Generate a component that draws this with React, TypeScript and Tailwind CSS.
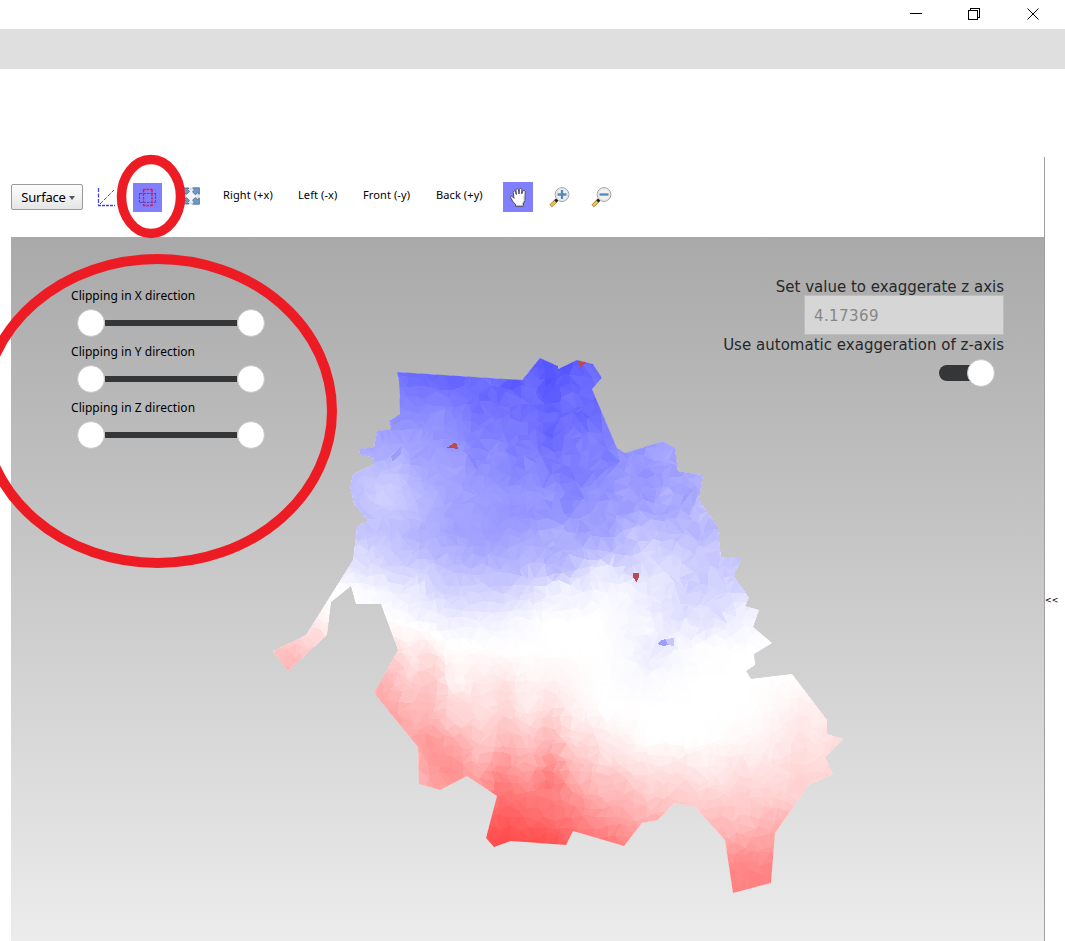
import React from "react";

const OUTLINE =
  "397,372 522,380 540,358 558,366 558,369 577,360 593,364 602,378 592,389 617,448 625,453 663,441 675,448 678,471 703,475 699,500 718,527 721,557 742,557 734,576 749,598 745,606 759,610 753,627 772,643 754,654 755,665 746,671 751,679 792,674 827,720 827,734 844,739 825,757 833,774 809,785 775,833 771,883 733,893 725,840 695,807 675,803 658,820 642,823 624,846 573,831 566,845 511,841 494,847 486,838 497,796 467,776 440,790 419,784 418,747 374,693 398,650 381,604 356,604 351,586 331,602 327,635 288,671 273,651 306,635 353,560 357,526 368,521 354,504 350,487 353,474 374,464 374,458 359,454 360,449 374,447 377,431 391,429 389,421 400,414 399,381";

// Scalar field sampled every 50px across (from x=250) and 30px down (from y=350).
const FIELD: number[][] = [
  [-60, -60, -60, -63, -62, -60, -64, -59, -50, -40, -40, -30, -30],
  [-55, -55, -60, -56, -59, -60, -64, -58, -50, -40, -40, -30, -30],
  [-45, -45, -45, -44, -48, -55, -60, -57, -50, -40, -35, -30, -30],
  [-38, -38, -37, -37, -42, -50, -57, -53, -40, -36, -32, -25, -20],
  [-28, -28, -28, -29, -37, -45, -50, -47, -39, -34, -29, -25, -20],
  [-22, -22, -25, -23, -37, -41, -42, -41, -37, -30, -27, -20, -15],
  [-20, -20, -24, -27, -35, -38, -37, -35, -25, -28, -25, -15, -10],
  [-8, -8, -12, -19, -29, -31, -27, -20, -14, -25, -21, -15, 0],
  [0, 0, 0, -7, -18, -19, -12, -2, -7, -19, -14, -4, 0],
  [13, 9, 0, 0, -8, -5, 0, 0, -5, -12, -4, 0, 0],
  [20, 17, 15, 15, 2, 0, 0, 0, -7, -1, 0, 0, 3],
  [20, 25, 30, 26, 11, 6, 4, 0, -2, 0, 0, 1, 6],
  [20, 30, 36, 34, 18, 12, 12, 0, 0, 0, 0, 6, 10],
  [20, 30, 36, 34, 31, 24, 23, 8, 0, 0, 3, 10, 14],
  [20, 25, 30, 20, 42, 42, 38, 21, 11, 9, 11, 14, 17],
  [20, 20, 20, 18, 35, 57, 50, 34, 22, 18, 18, 20, 22],
  [50, 50, 50, 50, 60, 68, 63, 48, 36, 28, 29, 32, 34],
  [60, 60, 60, 60, 65, 73, 72, 60, 50, 45, 46, 46, 46],
  [60, 60, 60, 60, 65, 73, 72, 60, 50, 48, 50, 50, 50],
];

function hash(a: number, b: number, c: number) {
  const s = Math.sin(a * 127.1 + b * 311.7 + c * 74.7) * 43758.5453;
  return s - Math.floor(s);
}

function smooth(t: number) {
  return t * t * (3 - 2 * t);
}

function valueNoise(x: number, y: number, seed: number) {
  const i = Math.floor(x);
  const j = Math.floor(y);
  const u = smooth(x - i);
  const v = smooth(y - j);
  const top = hash(i, j, seed) * (1 - u) + hash(i + 1, j, seed) * u;
  const low = hash(i, j + 1, seed) * (1 - u) + hash(i + 1, j + 1, seed) * u;
  return (top * (1 - v) + low * v) * 2 - 1;
}

function sample(x: number, y: number) {
  const gx = Math.min(11.999, Math.max(0, (x - 250) / 50));
  const gy = Math.min(17.999, Math.max(0, (y - 350) / 30));
  const i = Math.floor(gx);
  const j = Math.floor(gy);
  const u = gx - i;
  const v = gy - j;
  return (
    (FIELD[j][i] * (1 - u) + FIELD[j][i + 1] * u) * (1 - v) +
    (FIELD[j + 1][i] * (1 - u) + FIELD[j + 1][i + 1] * u) * v
  );
}

function shade(x: number, y: number, seed: number) {
  const base = sample(x, y);
  const blue = base < 0;
  const weight = Math.min(1, Math.abs(base) / 10);
  const rough = blue && (x > 540 || (x > 470 && y < 470)) ? 1.1 : 0.5;
  let v = base + weight * (valueNoise(x / 19, y / 19, 3) * 4.5 * rough + (seed - 0.5) * 4 * rough);
  // Pale basin on the west side.
  if (blue) v += 4 * Math.exp(-((x - 380) ** 2 + (y - 492) ** 2) / 900);
  // Ridges running north to south.
  if (!blue && y < 790 && x < 610) v += weight * valueNoise(x / 24, y / 110, 9) * 8;
  v = blue ? Math.min(0, v) : Math.max(0, v);
  const c = Math.round(255 * (1 - Math.abs(v) / 100));
  return v < 0 ? `rgb(${c},${c},255)` : `rgb(255,${c},${c})`;
}

function buildMesh() {
  const step = 9;
  const groups = new Map<string, string>();
  const point = (i: number, j: number): [number, number] => [
    Math.round((266 + i * step + (hash(i, j, 1) - 0.5) * 8) * 10) / 10,
    Math.round((350 + j * step + (hash(i, j, 2) - 0.5) * 8) * 10) / 10,
  ];
  for (let j = 0; j < 62; j++) {
    for (let i = 0; i < 66; i++) {
      const a = point(i, j);
      const b = point(i + 1, j);
      const c = point(i + 1, j + 1);
      const d = point(i, j + 1);
      const tris = hash(i, j, 5) > 0.5 ? [[a, b, c], [a, c, d]] : [[a, b, d], [b, c, d]];
      tris.forEach((t, k) => {
        const cx = (t[0][0] + t[1][0] + t[2][0]) / 3;
        const cy = (t[0][1] + t[1][1] + t[2][1]) / 3;
        const color = shade(cx, cy, hash(i, j, 11 + k));
        groups.set(color, (groups.get(color) ?? "") + `M${t[0]}L${t[1]}L${t[2]}Z`);
      });
    }
  }
  return Array.from(groups.entries());
}

const MESH = buildMesh();

function Terrain() {
  return (
    <svg className="absolute inset-0" width="1033" height="704" viewBox="11 237 1033 704" shapeRendering="crispEdges">
      <defs>
        <clipPath id="outline">
          <polygon points={OUTLINE} />
        </clipPath>
      </defs>
      <g clipPath="url(#outline)">
        <polygon points={OUTLINE} fill="#fff" />
        {MESH.map(([color, d]) => (
          <path key={color} d={d} fill={color} />
        ))}
        <path d="M657 644L662 640L665 639L668 645L663 646Z" fill="#9c9cff" />
        <path d="M665 639L674 638V646L668 645Z" fill="#c5c5ff" />
        <path d="M391 456L402 446L401 453L393 462Z" fill="#9c9cfb" />
      </g>
      <g fill="#b84c50">
        <path d="M577 361L585 362L586 363L580 367.500Z" />
        <path d="M447 447.500L454 443L456 443L458.500 449Z" />
        <path d="M633 573H639V577L637 581.500H636L633 577Z" />
      </g>
    </svg>
  );
}

function WindowControls() {
  return (
    <div className="flex h-[29px] items-start justify-end bg-white pt-2 pr-[25px]">
      <svg width="130" height="13" viewBox="0 0 130 13" fill="none" stroke="#000" shapeRendering="crispEdges">
        <path d="M0 5.500h12M58.500 2.500h9v9h-9zM60.500 2V.5h9v9H68" />
        <path d="M117.500 .5l11 11M128.500 .5l-11 11" shapeRendering="auto" />
      </svg>
    </div>
  );
}

function AngleIcon() {
  return (
    <svg width="20" height="20" viewBox="0 0 20 20" fill="none" stroke="#4646e0" className="ml-[13px]">
      <path d="M2.500 1v17" strokeDasharray="4 1.500" strokeWidth="1.300" />
      <path d="M2 18.500h17" strokeDasharray="3 1" strokeWidth="1.300" />
      <path d="M4 17L18 3" strokeDasharray="4 1.500" strokeWidth="1" />
    </svg>
  );
}

function ClipIcon() {
  return (
    <svg width="29" height="29" viewBox="0 0 29 29" fill="none" className="ml-[17px] bg-[#8080ff]">
      <path d="M6.500 9V6.500H9M20 6.500H22.500V9M22.500 20V22.500H20M9 22.500H6.500V20" stroke="#2fbd6a" />
      <path d="M7 10.500H22M7 19.500H22" stroke="#4545cf" strokeDasharray="2.500 1" strokeWidth="1.200" />
      <path d="M6.500 10V20M22.500 10V20" stroke="#4545cf" strokeDasharray="2.500 1" strokeWidth="1.200" />
      <path d="M10 6.500H20M10 22.500H20" stroke="#e8124c" strokeDasharray="2.500 1" strokeWidth="1.400" />
      <path d="M10.500 7V22.500M19 7V22.500" stroke="#e8124c" strokeDasharray="2.500 1" strokeWidth="1.400" />
    </svg>
  );
}

function ExpandIcon() {
  return (
    <svg width="18" height="18" viewBox="0 0 18 18" className="-mt-[3px] ml-[20px]">
      <path d="M.5 .5h17v17H.5z" fill="#d9dde2" />
      <path d="M9 2l3 4 4 3-4 3-3 4-3-4-4-3 4-3z" fill="#f4f4f4" />
      <g fill="#6d9ac6" stroke="#44698f" strokeWidth=".7">
        <path d="M1 1h6L5.500 2.500 7.500 4.500 4.500 7.500 2.500 5.500 1 7zM17.400 .8v6.500l-1.900-1.500L13.500 7.800 10.500 5l2-2L10.800.8zM17.400 17.200h-6.600l1.700-2L10.500 13.300 13.200 10.600l2.200 2 2-1.600zM1 17v-6l1.500 1.500L4.500 10.500 7.500 13.500 5.500 15.500 7 17z" />
      </g>
      <path d="M0 13l2-1.500 1.500 2L2 15z" fill="#111" />
    </svg>
  );
}

function HandIcon() {
  return (
    <div className="ml-[19px] flex h-[30px] w-[30px] items-center justify-center bg-[#8080ff] pl-0.5">
      <svg width="20" height="22" viewBox="0 0 20 22">
        <path
          d="M6.500 20.300v-1.800L3.600 15.200 1.700 11.700C1 10.200 2.600 9.500 3.600 10.800L5 12.300 4.200 6.300c-.2-1.800 2.100-2 2.400-.3L7.300 8.500 7 4.100c-.1-1.800 2.300-1.900 2.500-.1L10 8l.4-4.500c.2-1.700 2.500-1.500 2.400.2L12.700 8l1.100-2.800c.6-1.500 2.700-1 2.400.8L15.900 14.500 14.200 18v2.300z"
          fill="#fff"
          stroke="#494957"
          strokeWidth="1"
          strokeLinejoin="round"
        />
        <path d="M15 10v4.500L13.300 17.800v1.700H7.500" fill="none" stroke="#b9b9c0" strokeWidth=".8" />
      </svg>
    </div>
  );
}

function ZoomIcon({ plus }: { plus?: boolean }) {
  return (
    <svg width="22" height="22" viewBox="0 0 22 22">
      <path d="M1.700 20L8 13.700" stroke="#987735" strokeWidth="3.600" />
      <path d="M2.100 19.600L6.500 15.200" stroke="#f7c646" strokeWidth="2.300" />
      <path d="M6.300 15.400L8.500 13.200" stroke="#242424" strokeWidth="3" />
      <circle cx="13" cy="8.500" r="6.900" fill="#f0f1f2" stroke="#a0a0a0" strokeWidth="1" />
      <circle cx="13" cy="8.500" r="5.900" fill="none" stroke="#dedede" />
      <path d={plus ? "M8.500 8.500h9M13 4v9" : "M8.500 8.500h9"} stroke="#5289bb" strokeWidth="2.300" />
    </svg>
  );
}

function Toolbar() {
  return (
    <div className="flex h-20 items-center whitespace-nowrap bg-white font-['Noto_Sans',sans-serif] text-black">
      <button className="flex h-[26px] w-[72px] items-center justify-center gap-[3px] rounded-[2px] border border-[#999] bg-linear-to-b from-[#fdfdfd] to-[#e5e5e5] pt-0.5 pl-0.5 text-[13px] tracking-[-0.2px]">
        Surface
        <span className="h-0 w-0 border-x-[3.500px] border-t-[4px] border-x-transparent border-t-[#555]" />
      </button>
      <AngleIcon />
      <ClipIcon />
      <ExpandIcon />
      <div className="ml-[23px] flex pb-1 text-[11px] tracking-[0.1px]">
        <span className="w-[75px]">Right (+x)</span>
        <span className="w-[65px]">Left (-x)</span>
        <span className="w-[73px]">Front (-y)</span>
        <span className="w-[48px]">Back (+y)</span>
      </div>
      <HandIcon />
      <div className="ml-[16px] flex gap-5">
        <ZoomIcon plus />
        <ZoomIcon />
      </div>
    </div>
  );
}

function RangeRow({ axis }: { axis: string }) {
  return (
    <div className="h-14 w-[200px]">
      <div className="h-[18px] whitespace-nowrap pt-px font-['Noto_Sans',sans-serif] text-[12px] leading-[18px] tracking-[0.05px] text-black">
        Clipping in {axis} direction
      </div>
      <div className="ml-[6px] flex h-[38px] w-[188px] items-center">
        <span className="h-7 w-7 shrink-0 rounded-full border border-[#c4c4c4] bg-white" />
        <span className="h-1.5 flex-1 bg-[#353637]" />
        <span className="h-7 w-7 shrink-0 rounded-full border border-[#c4c4c4] bg-white" />
      </div>
    </div>
  );
}

function Exaggeration() {
  return (
    <div className="flex flex-col items-end whitespace-nowrap font-['DejaVu_Sans',sans-serif] text-[15px] text-[#26282a]">
      <div className="h-[18px] pt-px leading-[18px]">Set value to exaggerate z axis</div>
      <div className="flex h-10 w-[200px] items-center border border-[#bdbdbd] bg-[#d6d6d6] pt-0.5 pl-[9px] tracking-[0.4px] text-[#858687]">
        4.17369
      </div>
      <div className="h-[18px] pt-px leading-[18px] tracking-[0.02px]">Use automatic exaggeration of z-axis</div>
      <div className="mt-[6px] mr-[9px] flex h-7 w-14 items-center">
        <span className="h-4 w-9 rounded-l-full bg-[#353637]" />
        <span className="-ml-2 h-7 w-7 shrink-0 rounded-full border border-[#c4c4c4] bg-white" />
      </div>
    </div>
  );
}

export default function App() {
  return (
    <div className="relative flex h-[941px] w-[1065px] flex-col overflow-hidden bg-white">
      <WindowControls />
      <div className="h-10 shrink-0 bg-[#dfdfdf]" />
      <div className="mt-[88px] flex h-[784px] pl-[11px]">
        <div className="flex w-[1034px] flex-col border-r border-[#a0a0a0]">
          <Toolbar />
          <div className="relative flex h-[704px] justify-between bg-linear-to-b from-[#a9a9a9] to-[#ececec]">
            <Terrain />
            <div className="relative pt-[49px] pl-[60px]">
              <RangeRow axis="X" />
              <RangeRow axis="Y" />
              <RangeRow axis="Z" />
            </div>
            <div className="relative pt-[40px] pr-10">
              <Exaggeration />
            </div>
          </div>
        </div>
        <div className="pt-[437px] font-['DejaVu_Sans',sans-serif] text-[8px] leading-[14px] text-black">&lt;&lt;</div>
      </div>
      <svg className="pointer-events-none absolute inset-0" width="1065" height="941" fill="none" stroke="#ed1c24">
        <ellipse cx="151" cy="196.500" rx="29.500" ry="37" strokeWidth="9.500" />
        <ellipse cx="157.500" cy="411" rx="174.500" ry="152" strokeWidth="10" />
      </svg>
    </div>
  );
}
